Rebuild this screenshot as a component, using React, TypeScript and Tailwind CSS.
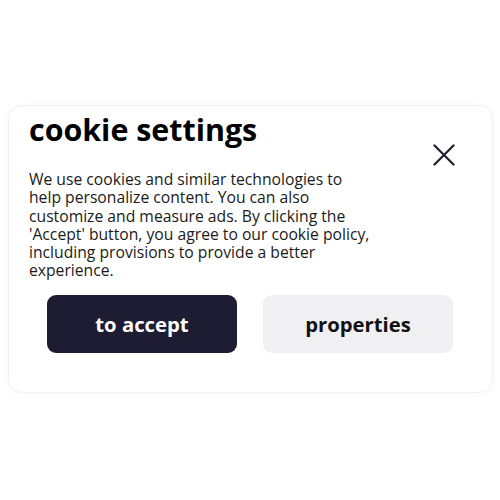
import React from "react";

export default function App() {
  return (
    <div
      className="w-[500px] h-[500px] bg-white overflow-hidden"
      style={{ fontFamily: '"Open Sans", "Noto Sans", sans-serif' }}
    >
      <div className="relative mt-[105px] ml-[8px] w-[485px] h-[288px] rounded-[14px] border border-[#f1f1f1] bg-white shadow-[0_0_10px_rgba(0,0,0,0.03)] pt-[7px] pl-[20px] flex flex-col">
        <h1 className="text-[30.4px] leading-[34px] font-bold text-black">
          cookie settings
        </h1>
        <p className="mt-[23px] w-[343px] text-[15.7px] leading-[18.3px] text-[#1a1a1a]">
          We use cookies and similar technologies to help personalize content. You can also
          customize and measure ads. By clicking the 'Accept' button, you agree to our cookie
          policy, including provisions to provide a better experience.
        </p>
        <button
          aria-label="close"
          className="absolute left-[424px] top-[38px] w-[22px] h-[22px] flex items-center justify-center"
        >
          <svg width="22" height="22" viewBox="0 0 22 22" fill="none">
            <path d="M1.5 1.5 L20.5 20.5 M20.5 1.5 L1.5 20.5" stroke="#1e1e2e" strokeWidth="2.2" strokeLinecap="round" />
          </svg>
        </button>
        <div className="mt-[15px] ml-[18px] flex gap-[26px]">
          <button className="w-[190px] h-[58px] rounded-[9px] bg-[#1d1c33] text-white text-[20.3px] font-bold">
            to accept
          </button>
          <button className="w-[190px] h-[58px] rounded-[9px] bg-[#f0f0f2] text-[#111] text-[20.3px] font-bold">
            properties
          </button>
        </div>
      </div>
    </div>
  );
}
